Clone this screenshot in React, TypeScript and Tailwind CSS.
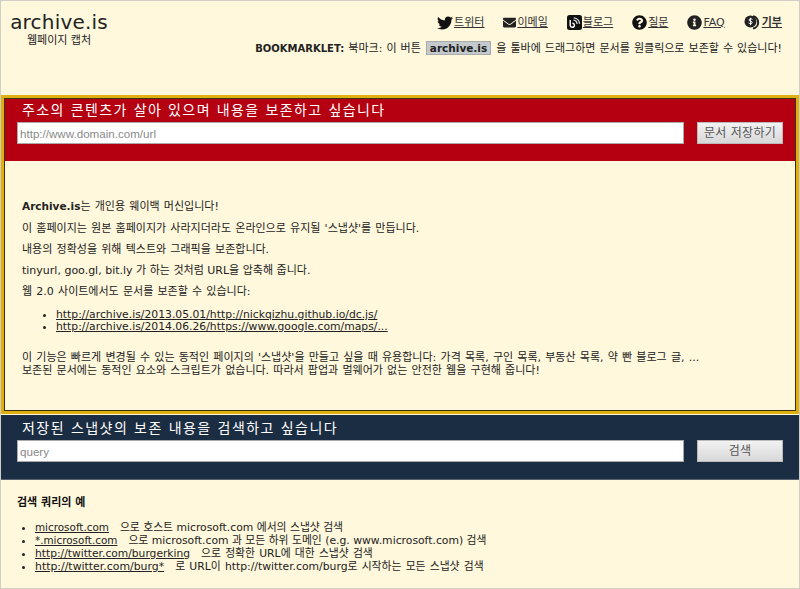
import { FaTwitter, FaEnvelope, FaQuestionCircle, FaInfoCircle } from 'react-icons/fa'

const FONT = "font-['DejaVu_Sans','Noto_Sans_CJK_KR',sans-serif]"

function BlogIcon() {
  return (
    <svg width="15" height="15" viewBox="0 0 15 15" className="shrink-0">
      <rect x="0" y="0" width="15" height="15" rx="2.5" fill="#111" />
      <path d="M3.2 5v5.2a2.1 2.1 0 1 0 2.1-2.1" fill="none" stroke="#fff" strokeWidth="1.4" />
      <path d="M6.5 5.2a4 4 0 0 1 3.6 3.8M6.8 2.8a6.4 6.4 0 0 1 5.8 6" fill="none" stroke="#ddd" strokeWidth="1.3" />
    </svg>
  )
}

function CoinIcon() {
  return (
    <svg width="17" height="15" viewBox="0 0 17 15" className="shrink-0">
      <path d="M9 1.2a6.3 6.3 0 0 1 0 12.4" fill="none" stroke="#222" strokeWidth="2" />
      <circle cx="6.5" cy="6.5" r="6" fill="#222" />
      <path d="M8.4 4.4c-.5-.8-3.4-1-3.4.6 0 1.6 3.2.8 3.2 2.5 0 1.5-2.8 1.4-3.6.5M6.6 2.8v7.4" fill="none" stroke="#fff" strokeWidth="1" />
    </svg>
  )
}

const NAV = [
  { label: '트위터', icon: <FaTwitter size={16} color="#111" /> },
  { label: '이메일', icon: <FaEnvelope size={13} color="#222" /> },
  { label: '블로그', icon: <BlogIcon /> },
  { label: '질문', icon: <FaQuestionCircle size={15} color="#111" /> },
  { label: 'FAQ', icon: <FaInfoCircle size={15} color="#222" /> },
  { label: '기부', icon: <CoinIcon />, bold: true },
]

const LINES = [
  { text: '이 홈페이지는 원본 홈페이지가 사라지더라도 온라인으로 유지될 \'스냅샷\'를 만듭니다.', spaced: true },
  { text: '내용의 정확성을 위해 텍스트와 그래픽을 보존합니다.', spaced: true },
  { text: 'tinyurl, goo.gl, bit.ly 가 하는 것처럼 URL을 압축해 줍니다.', spaced: false },
  { text: '웹 2.0 사이트에서도 문서를 보존할 수 있습니다:', spaced: true },
]

const EXAMPLES = [
  { href: 'microsoft.com', text: '으로 호스트 microsoft.com 에서의 스냅샷 검색', cls: 'text-[10.4px]', row: '' },
  { href: '*.microsoft.com', text: '으로 microsoft.com 과 모든 하위 도메인 (e.g. www.microsoft.com) 검색', cls: 'text-[10.4px]', row: '' },
  { href: 'http://twitter.com/burgerking', text: '으로 정확한 URL에 대한 스냅샷 검색', cls: 'text-[10.7px]', row: '[word-spacing:0.8px]' },
  { href: 'http://twitter.com/burg*', text: '로 URL이 http://twitter.com/burg로 시작하는 모든 스냅샷 검색', cls: 'text-[10.9px]', row: '[word-spacing:0.8px]' },
]

function InputRow({ placeholder, button }: { placeholder: string; button: string }) {
  return (
    <div className="flex items-center justify-between">
      <input
        readOnly
        placeholder={placeholder}
        className="w-[667px] h-[22px] bg-white border border-[#aaa] px-[2px] text-[11.6px] font-['Liberation_Sans',sans-serif] placeholder:text-[#8a8a8a] outline-none"
      />
      <button className="w-[86px] h-[22px] border border-[#bbb] bg-gradient-to-b from-[#f2f2f2] to-[#d8d8d8] text-[12px] text-[#555] tracking-[0.3px]">
        {button}
      </button>
    </div>
  )
}

export default function App() {
  return (
    <div className={`${FONT} w-[800px] h-[589px] overflow-hidden bg-[#fff8dc] border border-[#cfcfc8] text-[#222]`}>
      {/* Header */}
      <div className="h-[94px] flex justify-between pl-[8px] pr-[17px]">
        <div className="flex flex-col items-center w-[100px] pt-[8px]">
          <div className="text-[20px] leading-[26px] text-[#222] tracking-[0.2px]">archive.is</div>
          <div className="text-[11px] leading-[12px] text-[#222]">웹페이지 캡처</div>
        </div>
        <div className="flex flex-col items-end pt-[13px]">
          <div className="flex items-center gap-[19px] h-[17px]">
            {NAV.map((n) => (
              <a key={n.label} className="flex items-center gap-[1px] text-[11px] underline text-[#333]">
                {n.icon}
                <span className={n.bold ? 'font-bold pt-px' : 'pt-px'}>{n.label}</span>
              </a>
            ))}
          </div>
          <div className="mt-[9px] text-[11px] leading-[16px] whitespace-nowrap [word-spacing:0.55px]">
            <b className="text-[10px]">BOOKMARKLET:</b> 북마크: 이 버튼{' '}
            <span className="mx-[1px] px-[3px] bg-[#c3c9cc] border border-[#aaa] font-bold text-[10.5px] text-[#222]">archive.is</span>{' '}
            을 툴바에 드래그하면 문서를 원클릭으로 보존할 수 있습니다!
          </div>
        </div>
      </div>

      {/* Save section */}
      <div className="h-[319px] w-[798px] border-[3px] border-[#e0b010]">
        <div className="h-full border border-[#3a3312]">
          <div className="h-[62px] bg-[#b40010] pl-[12px] pr-[12px] pt-[2px]">
            <div className="text-[14px] leading-[18px] text-white pl-[5px] tracking-[1.4px] mb-[3px]">주소의 콘텐츠가 살아 있으며 내용을 보존하고 싶습니다</div>
            <InputRow placeholder="http://www.domain.com/url" button="문서 저장하기" />
          </div>
          <div className="pl-[17px] pr-[13px] pt-[35px] text-[11px] text-[#222]">
            <p className="leading-[21px] mb-px [word-spacing:0.7px]"><b className="text-[10.5px]">Archive.is</b>는 개인용 웨이백 머신입니다!</p>
            {LINES.map((l) => (
              <p key={l.text} className={l.spaced ? 'leading-[21px] [word-spacing:0.7px]' : 'leading-[21px]'}>{l.text}</p>
            ))}
            <ul className="list-disc pl-[34px] mt-[7px] text-[10.8px] leading-[12px]">
              <li><a className="underline">http://archive.is/2013.05.01/http://nickqizhu.github.io/dc.js/</a></li>
              <li><a className="underline">http://archive.is/2014.06.26/https://www.google.com/maps/...</a></li>
            </ul>
            <p className="mt-[18px] leading-[14px] whitespace-nowrap [word-spacing:0.7px]">이 기능은 빠르게 변경될 수 있는 동적인 페이지의 '스냅샷'을 만들고 싶을 때 유용합니다: 가격 목록, 구인 목록, 부동산 목록, 약 빤 블로그 글, ...</p>
            <p className="leading-[12px] whitespace-nowrap [word-spacing:0.7px]">보존된 문서에는 동적인 요소와 스크립트가 없습니다. 따라서 팝업과 멀웨어가 없는 안전한 웹을 구현해 줍니다!</p>
          </div>
        </div>
      </div>

      {/* Search section */}
      <div className="h-[65px] mt-[1px] bg-[#1b2d42] border-b border-[#56626f] pl-[16px] pr-[16px] pt-[4px]">
        <div className="text-[14px] leading-[18px] text-white pl-[5px] tracking-[1.45px] mb-[3px]">저장된 스냅샷의 보존 내용을 검색하고 싶습니다</div>
        <InputRow placeholder="query" button="검색" />
      </div>

      {/* Examples */}
      <div className="pl-[16px] pt-[16px] text-[10.8px]">
        <div className="font-bold text-[11px] leading-[14px] text-[#111]">검색 쿼리의 예</div>
        <ul className="list-disc pl-[18px] mt-[11px] leading-[13px]">
          {EXAMPLES.map((e) => (
            <li key={e.href} className={e.row}>
              <a className={`underline mr-[11px] ${e.cls}`}>{e.href}</a>
              {e.text}
            </li>
          ))}
        </ul>
      </div>
    </div>
  )
}
